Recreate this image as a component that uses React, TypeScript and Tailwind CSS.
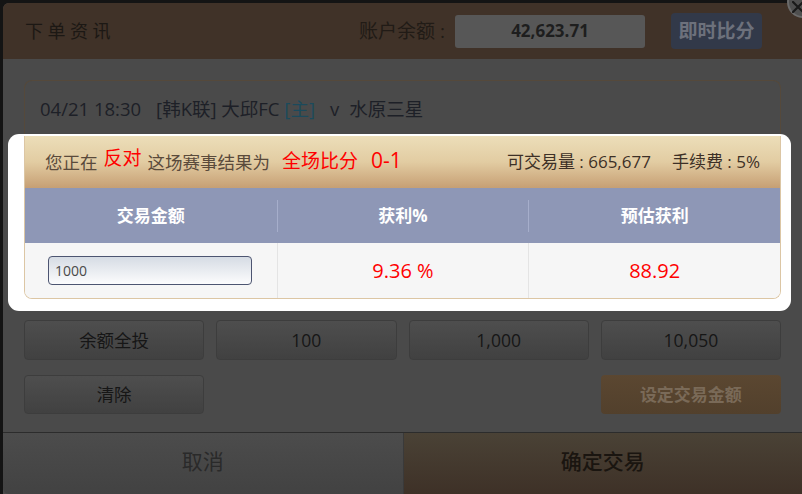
const font = "font-['Open_Sans','Noto_Sans_CJK_SC',sans-serif]";

function DimButton({ label, className = '' }: { label: string; className?: string }) {
  return (
    <div
      className={`flex items-center justify-center rounded-[4px] border border-[#3d3d3d] bg-gradient-to-b from-[#4e4e4e] to-[#414141] text-[17.5px] text-[#161616] ${className}`}
    >
      {label}
    </div>
  );
}

export default function App() {
  return (
    <div className={`w-[802px] h-[494px] overflow-hidden bg-[#141414] pt-[3px] pl-[3px] ${font}`}>
      <div className="relative flex h-[491px] w-[799px] flex-col rounded-tl-[6px] bg-[#4a4a4a]">
        {/* close button */}
        <div className="absolute -right-[17px] -top-[17px] flex h-[32px] w-[32px] items-center justify-center rounded-full border-2 border-[#6a6a6a] bg-[#4f4f4f]">
          <svg width="12" height="12" viewBox="0 0 12 12" className="-translate-x-[5px] translate-y-[5px]">
            <path d="M1 1L11 11M11 1L1 11" stroke="#1a1a1a" strokeWidth="2.2" strokeLinecap="round" />
          </svg>
        </div>

        {/* header */}
        <div className="flex h-[56px] items-center rounded-tl-[6px] bg-[#403228] pl-[22px] pr-[40px]">
          <div className="text-[18px] tracking-[4.5px] text-[#1c1814]">下单资讯</div>
          <div className="ml-auto text-[19px] text-[#211b16]">账户余额 :</div>
          <div className="ml-[10px] flex h-[33px] w-[190px] items-center justify-center rounded-[3px] bg-[#575757] text-[17px] font-bold text-[#1e1e1e]">
            42,623.71
          </div>
          <div className="ml-[26px] flex h-[36px] w-[91px] items-center justify-center rounded-[4px] bg-[#323949] text-[19px] font-bold text-[#6d717c]">
            即时比分
          </div>
        </div>

        {/* match card */}
        <div className="mx-[21px] mt-[21px] flex flex-col">
          <div className="flex h-[56px] items-center gap-[15px] rounded-t-[8px] border border-b-0 border-[#55493b] pl-[15px] text-[18.5px] text-[#1d2027]">
            <span>04/21 18:30</span>
            <span>
              [韩K联] 大邱FC <span className="text-[#1b4a5c]">[主]</span>
            </span>
            <span>v</span>
            <span className="-ml-[5px]">水原三星</span>
          </div>

          {/* spotlight */}
          <div className="relative z-10 -mb-[12px] -ml-[16px] -mr-[10px] -mt-[2px] rounded-[11px] bg-white pb-[12px] pl-[16px] pr-[10px] pt-[2px]">
            <div className="overflow-hidden rounded-b-[8px] border border-t-0 border-[#dcc6a4]">
              <div className="flex h-[52px] items-center bg-gradient-to-b from-[#ecdeb9] via-[#e2cca2] to-[#c69f74] pl-[20px] pr-[20px] text-[17.5px] text-[#5a4a3b]">
                <span>您正在</span>
                <span className="relative -top-[4px] mx-[6px] text-[19px] text-[#ff0000]">反对</span>
                <span>这场赛事结果为</span>
                <span className="relative -top-[1px] ml-[12px] text-[19px] text-[#ff0000]">全场比分</span>
                <span className="relative -top-[1px] ml-[13px] text-[21px] font-medium text-[#ff0000]">0-1</span>
                <span className="ml-auto text-[17px] text-[#3d3026]">可交易量 : 665,677</span>
                <span className="ml-[21px] text-[17px] text-[#3d3026]">手续费 : 5%</span>
              </div>
              <div className="grid h-[55px] grid-cols-3 items-center bg-[#8e97b6] text-[17px] font-bold text-white">
                <div className="flex h-[32px] items-center justify-center">交易金额</div>
                <div className="flex h-[32px] items-center justify-center border-l border-[#a6aecb]">获利%</div>
                <div className="flex h-[32px] items-center justify-center border-l border-[#a6aecb]">预估获利</div>
              </div>
              <div className="grid h-[55px] grid-cols-3 bg-[#f6f6f6] text-[20px] text-[#ff0000]">
                <div className="flex items-center pl-[23px]">
                  <div className="flex h-[29px] w-[204px] items-center rounded-[4px] border border-[#4d5571] bg-gradient-to-b from-[#d6dce4] to-[#fcfcfd] pl-[6px] text-[14px] text-[#4a4a4a]">
                    1000
                  </div>
                </div>
                <div className="flex items-center justify-center border-l border-[#e4e4e4]">9.36 %</div>
                <div className="flex items-center justify-center border-l border-[#e4e4e4]">88.92</div>
              </div>
            </div>
          </div>
        </div>

        {/* amount buttons */}
        <div className="mx-[21px] mt-[21px] grid h-[40px] grid-cols-4 gap-[12px]">
          <DimButton label="余额全投" />
          <DimButton label="100" />
          <DimButton label="1,000" />
          <DimButton label="10,050" />
        </div>
        <div className="mx-[21px] mt-[15px] grid h-[39px] grid-cols-4 gap-[12px]">
          <DimButton label="清除" />
          <div className="col-start-4 flex items-center justify-center rounded-[4px] bg-gradient-to-b from-[#5b4731] to-[#52402c] text-[17px] font-bold text-[#7a6a58]">
            设定交易金额
          </div>
        </div>

        {/* footer */}
        <div className="mt-[18px] grid flex-1 grid-cols-2 border-t border-[#2c2c2c] text-[21px]">
          <div className="flex items-center justify-center rounded-bl-[6px] bg-gradient-to-b from-[#4c4c4c] to-[#424242] pb-[4px] text-[#2a2a2a]">
            取消
          </div>
          <div className="flex items-center justify-center border-l border-[#3a3a3a] bg-gradient-to-b from-[#4a4236] to-[#3e3127] pb-[4px] font-medium text-[#1a1510]">
            确定交易
          </div>
        </div>
      </div>
    </div>
  );
}
